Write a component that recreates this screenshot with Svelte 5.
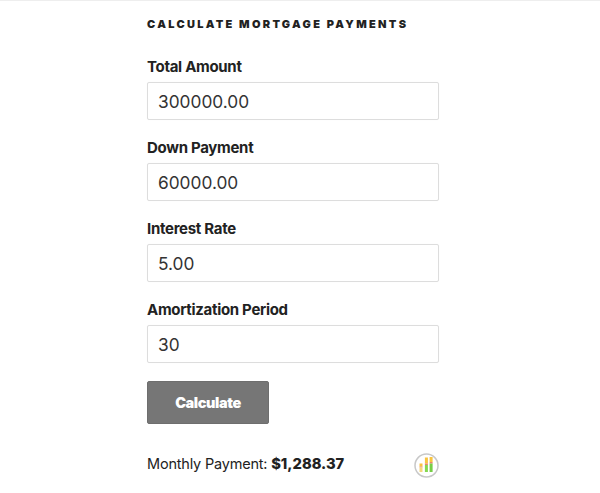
<script lang="ts">
    const fields = [
        { label: "Total Amount", value: "300000.00" },
        { label: "Down Payment", value: "60000.00" },
        { label: "Interest Rate", value: "5.00" },
        { label: "Amortization Period", value: "30" },
    ];
</script>

<div class="page">
    <section class="widget">
        <h2>Calculate Mortgage Payments</h2>

        <form class="fields">
            {#each fields as field}
                <label class="field">
                    <span>{field.label}</span>
                    <input type="text" value={field.value} />
                </label>
            {/each}
            <button type="button">Calculate</button>
        </form>

        <div class="result">
            <p>Monthly Payment: <strong>$1,288.37</strong></p>
            <svg class="chart" width="26" height="26" viewBox="0 0 26 26" aria-hidden="true">
                <circle cx="13.5" cy="12.5" r="11.5" fill="#fff" stroke="#c8c8c8" stroke-width="1.5" />
                <rect x="6.5" y="10.5" width="3" height="3" fill="#f9c43f" />
                <rect x="6.5" y="13.5" width="3" height="1" fill="#e9856a" />
                <rect x="6.5" y="14.5" width="3" height="4.5" fill="#f6d77c" />
                <rect x="11.9" y="4.5" width="3" height="6" fill="#f9c43f" />
                <rect x="11.9" y="10.5" width="3" height="1.5" fill="#e9856a" />
                <rect x="11.9" y="12" width="3" height="7" fill="#84d850" />
                <rect x="16.6" y="4" width="3" height="5" fill="#f9c43f" />
                <rect x="16.6" y="9" width="3" height="1.5" fill="#e9856a" />
                <rect x="16.6" y="10.5" width="3" height="8.5" fill="#76ce46" />
            </svg>
        </div>
    </section>
</div>

<style>
    :global(body) {
        margin: 0;
        background: #fff;
    }

    .page {
        height: 493px;
        box-sizing: border-box;
        border-top: 1px solid #eee;
        padding: 16px 161px 0 147px;
        font-family: Inter, "Liberation Sans", sans-serif;
        color: #222;
        overflow: hidden;
    }

    h2 {
        margin: 0 0 26px;
        font-size: 11px;
        line-height: 14px;
        font-weight: 900;
        letter-spacing: 2.3px;
        text-transform: uppercase;
    }

    .fields {
        display: flex;
        flex-direction: column;
        gap: 18px;
    }

    .field {
        display: flex;
        flex-direction: column;
        gap: 5px;
    }

    .field span {
        font-size: 15px;
        line-height: 20px;
        font-weight: 700;
        letter-spacing: -0.3px;
    }

    input {
        box-sizing: border-box;
        width: 292px;
        height: 38px;
        padding: 0 10px;
        border: 1px solid #ddd;
        border-radius: 2px;
        font-family: inherit;
        font-size: 17.3px;
        color: #333;
        background: #fff;
        box-shadow: 0 0 1px rgba(0, 0, 0, 0.05);
    }

    button {
        align-self: flex-start;
        width: 122px;
        height: 43px;
        border: 1px solid #6e6e6e;
        border-radius: 2px;
        background: #767676;
        color: #fff;
        font-family: inherit;
        font-size: 14.5px;
        font-weight: 900;
        letter-spacing: -0.4px;
        padding: 0 0 1px;
    }

    .result {
        display: flex;
        align-items: flex-start;
        justify-content: space-between;
        margin-top: 27px;
    }

    .result p {
        margin: 0;
        font-size: 14.5px;
        line-height: 26px;
        letter-spacing: -0.2px;
    }

    .result strong {
        font-size: 14.7px;
        font-weight: 800;
        letter-spacing: 0;
    }

    .chart {
        margin-top: 2px;
    }
</style>
